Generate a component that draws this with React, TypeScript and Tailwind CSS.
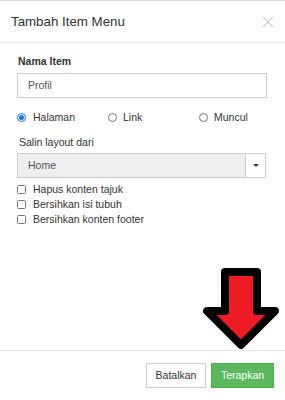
import React from "react";

const font = { fontFamily: '"Liberation Sans", Arial, sans-serif' };

function Radio({ checked }: { checked?: boolean }) {
  return checked ? (
    <span className="box-border flex h-[9px] w-[9px] items-center justify-center rounded-full border border-[#1a73e8] bg-white">
      <span className="block h-[5px] w-[5px] rounded-full bg-[#1a73e8]" />
    </span>
  ) : (
    <span className="box-border inline-block h-[9px] w-[9px] rounded-full border border-[#767676] bg-white" />
  );
}

function Check({ label }: { label: string }) {
  return (
    <div className="flex h-[15px] items-center">
      <span className="box-border inline-block h-[9px] w-[9px] rounded-[1.5px] border border-[#767676] bg-white" />
      <span className="ml-[7px] text-[10.5px] leading-[15px] text-[#333]">{label}</span>
    </div>
  );
}

export default function App() {
  return (
    <div style={font} className="relative box-border flex h-[400px] w-[285px] flex-col overflow-hidden border-t border-[#d9d9d9] bg-white">
      <div className="box-border flex h-[42px] shrink-0 items-center justify-between border-b border-[#e5e5e5] pl-[11px] pr-[11px]">
        <span className="text-[13.3px] leading-[16px] text-[#333]">Tambah Item Menu</span>
        <svg width="12" height="12" viewBox="0 0 12 12" className="mt-[1px]">
          <line x1="1" y1="1" x2="11" y2="11" stroke="#cfcfcf" strokeWidth="1.2" />
          <line x1="11" y1="1" x2="1" y2="11" stroke="#cfcfcf" strokeWidth="1.2" />
        </svg>
      </div>
      <div className="flex flex-1 flex-col pl-[17px] pt-[11px]">
        <div className="ml-[1px] text-[10.5px] font-bold leading-[15px] text-[#333]">Nama Item</div>
        <div className="mt-[4px] box-border flex h-[25px] w-[250px] items-center border border-[#ccc] pl-[10px] text-[10.5px] text-[#555]">
          Profil
        </div>
        <div className="mt-[12px] flex h-[15px] items-center text-[10.5px] text-[#333]">
          <div className="flex w-[91px] items-center">
            <Radio checked />
            <span className="ml-[7px]">Halaman</span>
          </div>
          <div className="flex w-[91px] items-center">
            <Radio />
            <span className="ml-[6px]">Link</span>
          </div>
          <div className="flex items-center">
            <Radio />
            <span className="ml-[6px]">Muncul</span>
          </div>
        </div>
        <div className="ml-[2px] mt-[10px] text-[10.5px] leading-[15px] text-[#333]">Salin layout dari</div>
        <div className="mt-[3px] flex h-[25px] w-[249px]">
          <div className="box-border flex h-full w-[229px] items-center border border-[#ccc] bg-[#eee] pl-[10px] text-[10.5px] text-[#555]">
            Home
          </div>
          <div className="box-border flex h-full w-[20px] items-center justify-center border border-l-0 border-[#ccc] bg-white">
            <svg width="6" height="3" viewBox="0 0 6 3">
              <polygon points="0,0 6,0 3,3" fill="#333" />
            </svg>
          </div>
        </div>
        <div className="mt-[4px] flex flex-col">
          <Check label="Hapus konten tajuk" />
          <Check label="Bersihkan isi tubuh" />
          <Check label="Bersihkan konten footer" />
        </div>
      </div>
      <div className="box-border flex h-[50px] shrink-0 items-start justify-end gap-[5px] border-t border-[#e5e5e5] pr-[11px] pt-[12px]">
        <button className="box-border flex h-[25px] w-[60px] items-center justify-center border border-[#ccc] bg-white text-[10.5px] text-[#333]">
          Batalkan
        </button>
        <button className="box-border flex h-[25px] w-[63px] items-center justify-center border border-[#4cae4c] bg-[#5cb85c] text-[10.5px] text-white">
          Terapkan
        </button>
      </div>
      <svg className="absolute left-0 top-0" width="285" height="400" viewBox="0 0 285 400">
        <polygon
          points="225,271 257,271 257,310 275,310 241,344 207,310 225,310"
          fill="#ed1c24"
          stroke="#000"
          strokeWidth="8"
          strokeLinejoin="round"
        />
      </svg>
    </div>
  );
}
